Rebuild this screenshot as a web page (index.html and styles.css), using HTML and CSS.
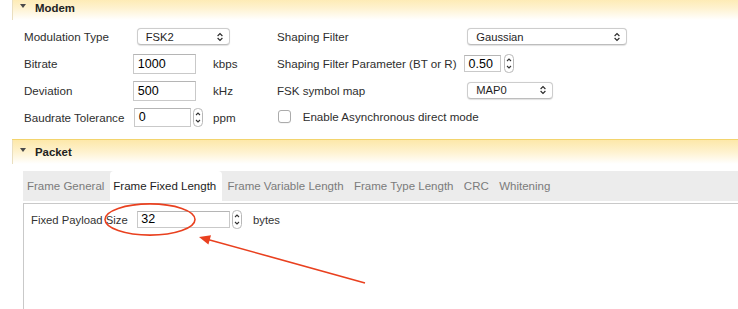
FILE: index.html
```html
<!DOCTYPE html>
<html>
<head>
<meta charset="utf-8">
<title>Modem / Packet</title>
<link rel="stylesheet" href="styles.css">
</head>
<body>
<div class="page">
  <section class="group">
    <div class="group-head"><span class="caret"></span>Modem</div>
    <div class="modem-body">
      <div class="col col-left">
        <div class="row">
          <span class="lbl">Modulation Type</span>
          <div class="popup pop-mod"><span>FSK2</span><svg class="chev" width="8" height="10" viewBox="0 0 8 10"><path d="M1.6 4 L4 1.6 L6.4 4 M1.6 6 L4 8.4 L6.4 6"/></svg></div>
        </div>
        <div class="row">
          <span class="lbl">Bitrate</span>
          <div class="field f-rate">1000</div>
          <span class="unit">kbps</span>
        </div>
        <div class="row">
          <span class="lbl">Deviation</span>
          <div class="field f-rate">500</div>
          <span class="unit">kHz</span>
        </div>
        <div class="row">
          <span class="lbl">Baudrate Tolerance</span>
          <div class="spinbox">
            <div class="field f-baud">0</div>
            <svg class="spin" width="10" height="19" viewBox="0 0 10 19"><rect x="0.5" y="0.5" width="9" height="18" rx="4"/><path d="M3 7 L5 5 L7 7 M3 12 L5 14 L7 12"/></svg>
          </div>
          <span class="unit">ppm</span>
        </div>
      </div>
      <div class="col col-right">
        <div class="row">
          <span class="lbl-r">Shaping Filter</span>
          <div class="popup pop-shape"><span>Gaussian</span><svg class="chev" width="8" height="10" viewBox="0 0 8 10"><path d="M1.6 4 L4 1.6 L6.4 4 M1.6 6 L4 8.4 L6.4 6"/></svg></div>
        </div>
        <div class="row">
          <span class="lbl-r">Shaping Filter Parameter (BT or R)</span>
          <div class="field f-bt">0.50</div>
          <svg class="spin spin-bt" width="10" height="19" viewBox="0 0 10 19"><rect x="0.5" y="0.5" width="9" height="18" rx="4"/><path d="M3 7 L5 5 L7 7 M3 12 L5 14 L7 12"/></svg>
        </div>
        <div class="row">
          <span class="lbl-r">FSK symbol map</span>
          <div class="popup pop-map"><span>MAP0</span><svg class="chev" width="8" height="10" viewBox="0 0 8 10"><path d="M1.6 4 L4 1.6 L6.4 4 M1.6 6 L4 8.4 L6.4 6"/></svg></div>
        </div>
        <div class="row">
          <span class="check"></span>
          <span class="check-lbl">Enable Asynchronous direct mode</span>
        </div>
      </div>
    </div>
  </section>

  <section class="group packet">
    <div class="group-head"><span class="caret caret-p"></span>Packet</div>
    <div class="tabs">
      <div class="tab first">Frame General</div>
      <div class="tab active">Frame Fixed Length</div>
      <div class="tab">Frame Variable Length</div>
      <div class="tab">Frame Type Length</div>
      <div class="tab">CRC</div>
      <div class="tab">Whitening</div>
    </div>
    <div class="pane">
      <div class="pane-row">
        <span class="pane-lbl">Fixed Payload Size</span>
        <div class="field f-size">32</div>
        <svg class="spin spin-size" width="10" height="19" viewBox="0 0 10 19"><rect x="0.5" y="0.5" width="9" height="18" rx="4"/><path d="M3 7 L5 5 L7 7 M3 12 L5 14 L7 12"/></svg>
        <span class="pane-unit">bytes</span>
      </div>
    </div>
  </section>
</div>

<svg class="annot" width="738" height="309" viewBox="0 0 738 309">
  <ellipse cx="150" cy="219.5" rx="45" ry="15.6" class="mark"/>
  <line x1="365" y1="283" x2="207" y2="239.2" class="mark"/>
  <polygon points="199,237 211,235.3 208.4,244.6" class="head"/>
</svg>
</body>
</html>
```

FILE: styles.css
```css
* { box-sizing: border-box; }

html, body {
  margin: 0;
  padding: 0;
  background: #ffffff;
}

body {
  position: relative;
  width: 738px;
  height: 309px;
  overflow: hidden;
  font-family: "Liberation Sans", Arial, sans-serif;
  font-size: 11.6px;
  color: #2e2e2e;
}

.page {
  margin-top: -4px;
  padding-left: 12px;
}

/* group headers */
.group-head {
  height: 24px;
  display: flex;
  align-items: center;
  padding-left: 7px;
  border-left: 1px solid #eadfbf;
  background: linear-gradient(to bottom, #fde8a9 0%, #fef2cf 50%, #ffffff 100%);
  font-weight: bold;
  font-size: 11.4px;
  color: #222;
}

.caret {
  width: 0;
  height: 0;
  border-left: 3px solid transparent;
  border-right: 3px solid transparent;
  border-top: 4px solid #4a4a4a;
  margin-right: 9px;
  margin-top: -4px;
}

.caret-p { margin-top: -5px; }

/* modem body */
.modem-body {
  display: flex;
  padding: 3px 0 0 12px;
}

.col-left { width: 253px; }

.col-left .row {
  display: grid;
  grid-template-columns: 109px 80px auto;
  align-items: center;
  height: 27px;
}

.col-right .row {
  display: flex;
  align-items: center;
  height: 27px;
}

.lbl { white-space: nowrap; }
.lbl-r { width: 187px; white-space: nowrap; }

.unit { white-space: nowrap; }

/* popup buttons */
.popup {
  display: flex;
  align-items: center;
  justify-content: space-between;
  padding: 0 5px 0 8px;
  background: #fff;
  border: 1px solid #cdcdcd;
  border-bottom-color: #bdbdbd;
  border-radius: 4px;
  box-shadow: 0 0.5px 1px rgba(0, 0, 0, 0.12);
  font-size: 11.2px;
  color: #1e1e1e;
}

.chev path {
  fill: none;
  stroke: #2a2a2a;
  stroke-width: 1.15;
}

.pop-mod {
  grid-column: 2 / 4;
  margin-left: 3.7px;
  width: 93.3px;
  height: 16.6px;
}

.pop-shape {
  margin-left: 3.3px;
  width: 159.4px;
  height: 16.6px;
}

.pop-map {
  margin-left: 3.3px;
  width: 86px;
  height: 17.3px;
}

/* text fields */
.field {
  display: flex;
  align-items: center;
  padding-left: 3.5px;
  background: #fff;
  border: 1px solid #c9c9c9;
  border-top-color: #b5b5b5;
  font-size: 12.5px;
  color: #000;
}

.f-rate {
  margin-left: 0.3px;
  width: 62.7px;
  height: 20px;
}

.spinbox {
  display: flex;
  align-items: center;
}

.f-baud {
  margin-left: 1.3px;
  width: 56.4px;
  height: 19.4px;
}

.spin {
  display: block;
  margin-left: 2px;
}

.spin rect {
  fill: #fff;
  stroke: #b8b8b8;
  stroke-width: 1;
}

.spin path {
  fill: none;
  stroke: #333;
  stroke-width: 1.1;
}

.f-bt {
  width: 36.7px;
  height: 17.6px;
}

.spin-bt { margin-left: 3.6px; }

/* checkbox */
.check {
  display: block;
  margin-left: 1.3px;
  width: 12.4px;
  height: 12.4px;
  margin-top: -2px;
  border: 1px solid #ababab;
  border-radius: 3px;
  background: #fff;
  box-shadow: 0 0.5px 0.5px rgba(0, 0, 0, 0.08);
}

.check-lbl {
  margin-left: 12px;
  margin-top: -2px;
  white-space: nowrap;
}

/* packet */
.packet {
  margin-top: 8px;
  border-top: 1px solid #f3d46d;
}

.tabs {
  display: flex;
  height: 30px;
  margin: 7px 0 0 11px;
  background: #ececec;
  font-size: 11.5px;
}

.tab {
  display: flex;
  align-items: center;
  padding: 0 5.2px;
  color: #7b7b7b;
  white-space: nowrap;
}

.tab.first { padding-left: 4px; }

.tab.active {
  background: #fff;
  color: #1d1d1d;
  border-radius: 4px 4px 0 0;
  padding: 0 6px 0 3.8px;
}

.pane {
  margin: 2px 0 0 11px;
  height: 120px;
  border-top: 1px solid #c9c9c9;
  border-left: 1px solid #c9c9c9;
  padding: 6px 0 0 7px;
}

.pane-row {
  display: flex;
  align-items: center;
  height: 19px;
  font-size: 11.3px;
}

.pane-lbl {
  width: 105.7px;
  white-space: nowrap;
  color: #333;
}

.f-size {
  width: 93.3px;
  height: 17.8px;
}

.spin-size { margin-left: 2.5px; }

.pane-unit {
  margin-left: 10.5px;
  color: #333;
}

/* annotation overlay */
.annot {
  position: absolute;
  left: 0;
  top: 0;
  pointer-events: none;
}

.annot .mark {
  fill: none;
  stroke: #e9401f;
  stroke-width: 1.6;
}

.annot .head {
  fill: #e9401f;
}
```
